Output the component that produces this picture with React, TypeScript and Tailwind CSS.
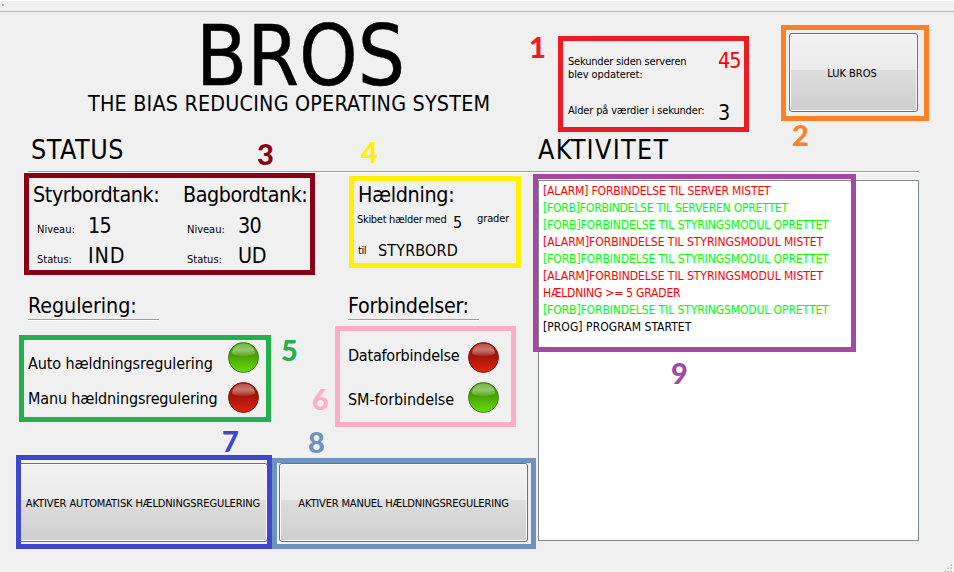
import type { ReactNode } from "react";

type Tone = "green" | "red";

function Led({ tone }: { tone: Tone }) {
  const id = `led-${tone}`;
  const green = tone === "green";
  return (
    <svg width="31" height="31" viewBox="0 0 31 31" className="block shrink-0">
      <defs>
        <linearGradient id={id} x1="0" y1="0" x2="0" y2="1">
          <stop offset="0" stopColor={green ? "#46a008" : "#a01408"} />
          <stop offset="0.42" stopColor={green ? "#48a007" : "#a01509"} />
          <stop offset="1" stopColor={green ? "#66de0e" : "#e0220e"} />
        </linearGradient>
        <linearGradient id={`${id}-gloss`} x1="0" y1="0" x2="0" y2="1">
          <stop offset="0" stopColor="#fff" stopOpacity="0.25" />
          <stop offset="0.5" stopColor="#fff" stopOpacity="0.42" />
          <stop offset="1" stopColor="#fff" stopOpacity="0.08" />
        </linearGradient>
      </defs>
      <circle cx="15.5" cy="15.5" r="15" fill={`url(#${id})`} stroke={green ? "#3d8010" : "#84180e"} strokeWidth="1" />
      <path d="M15.5 1.5C8.5 1.5 4.2 6 4 11.5c5 3.6 18 3.6 23 0C26.800 6 22.500 1.500 15.500 1.500Z" fill={`url(#${id}-gloss)`} />
    </svg>
  );
}

function PushButton({ className, children }: { className: string; children: ReactNode }) {
  return (
    <button
      className={`h-[79px] shrink-0 whitespace-nowrap rounded-[3px] border border-[#707070] bg-[linear-gradient(to_bottom,#f2f2f2_0%,#ebebeb_47%,#dddddd_47%,#cfcfcf_100%)] pt-[3px] text-center text-[11px] shadow-[inset_0_0_0_1px_#f8f8f8] ${className}`}
    >
      {children}
    </button>
  );
}

function Tank({ name, level, status, nameClass, statusClass }: { name: string; level: string; status: string; nameClass: string; statusClass: string }) {
  return (
    <div className="flex w-[150px] flex-col gap-[6px] leading-[24px]">
      <h3 className={`mb-px text-[21.33px] ${nameClass}`}>{name}</h3>
      <div className="flex h-[24px] items-baseline pl-[4px] text-[11px]">
        <span className="w-[51px]">Niveau:</span>
        <span className="text-[21.33px] tracking-[-0.8px]">{level}</span>
      </div>
      <div className="flex h-[24px] items-baseline pl-[4px] text-[11px]">
        <span className="w-[51px]">Status:</span>
        <span className={`text-[21.33px] ${statusClass}`}>{status}</span>
      </div>
    </div>
  );
}

const log = [
  { text: "[ALARM] FORBINDELSE TIL SERVER MISTET", style: "text-[#ff0000] tracking-[-0.15px]" },
  { text: "[FORB]FORBINDELSE TIL SERVEREN OPRETTET", style: "text-[#00ff00] tracking-[-0.2px]" },
  { text: "[FORB]FORBINDELSE TIL STYRINGSMODUL OPRETTET", style: "text-[#00ff00] tracking-[-0.09px]" },
  { text: "[ALARM]FORBINDELSE TIL STYRINGSMODUL MISTET", style: "text-[#ff0000] tracking-[-0.03px]" },
  { text: "[FORB]FORBINDELSE TIL STYRINGSMODUL OPRETTET", style: "text-[#00ff00] tracking-[-0.09px]" },
  { text: "[ALARM]FORBINDELSE TIL STYRINGSMODUL MISTET", style: "text-[#ff0000] tracking-[-0.03px]" },
  { text: "HÆLDNING >= 5 GRADER", style: "text-[#ff0000] tracking-[-0.2px]" },
  { text: "[FORB]FORBINDELSE TIL STYRINGSMODUL OPRETTET", style: "text-[#00ff00] tracking-[-0.09px]" },
  { text: "[PROG] PROGRAM STARTET", style: "text-black tracking-[0.05px]" },
];

const frames = [
  "left-[558px] top-[36px] h-[96px] w-[191px] border-[#ed1c24]",
  "left-[781px] top-[25px] h-[96px] w-[148px] border-[#ff7f27]",
  "left-[24px] top-[173px] h-[102px] w-[291px] border-[#880015]",
  "left-[349px] top-[176px] h-[92px] w-[172px] border-[#fff200]",
  "left-[19px] top-[335px] h-[87px] w-[252px] border-[#22b14c]",
  "left-[335px] top-[326px] h-[101px] w-[181px] border-[#ffaec9]",
  "left-[272px] top-[458px] h-[91px] w-[264px] border-[#7092be]",
  "left-[16px] top-[455px] h-[94px] w-[256px] border-[#3f48cc]",
  "left-[533px] top-[174px] h-[178px] w-[323px] border-[#a349a4]",
];

const marks = [
  "left-[529px] top-[37px] text-[#ed1c24]",
  "left-[792px] top-[125px] text-[#ff7f27]",
  "left-[257px] top-[144px] text-[#880015]",
  "left-[361px] top-[142px] text-[#fff200]",
  "left-[281px] top-[340px] text-[#22b14c]",
  "left-[312px] top-[389px] text-[#ffaec9]",
  "left-[222px] top-[431px] text-[#3f48cc]",
  "left-[308px] top-[432px] text-[#7092be]",
  "left-[671px] top-[363px] text-[#a349a4]",
];

export default function App() {
  return (
    <div className="relative flex h-[572px] w-[954px] flex-col overflow-hidden whitespace-nowrap bg-[#f0f0f0] font-['DejaVu_Sans_Condensed','DejaVu_Sans',sans-serif] text-black">
      <div className="h-[12px] shrink-0 border-b border-t border-b-[#b8b8b8] border-t-white pl-[2px] pt-[3px]">
        <div className="size-[2px] bg-[#b0b0b0] shadow-[1px_1px_0_white]" />
      </div>

      <header className="flex h-[159px] shrink-0">
        <div className="w-[538px] pt-[7px]">
          <h1 className="pl-[196px] text-[83px] leading-[75px] [-webkit-text-stroke:0.5px_black]">BROS</h1>
          <p className="pl-[88px] text-[21.33px] leading-[20px] tracking-[0.21px]">THE BIAS REDUCING OPERATING SYSTEM</p>
          <h2 className="mt-[21px] pl-[31px] text-[26.67px] leading-[30px] tracking-[0.6px]">STATUS</h2>
        </div>
        <div className="flex w-[416px] flex-col">
          <div className="flex h-[123px] pl-[30px]">
            <div className="w-[150px] pt-[43px] text-[11px] leading-[13px]">
              <p className="tracking-[-0.2px]">Sekunder siden serveren</p>
              <p className="tracking-[-0.1px]">blev opdateret:</p>
              <p className="mt-[23px] tracking-[-0.16px]">Alder på værdier i sekunder:</p>
            </div>
            <div className="w-[71px] pt-[37px] text-[21.33px] leading-[24px]">
              <p className="tracking-[-0.9px] text-[#ff0000]">45</p>
              <p className="mt-[28px]">3</p>
            </div>
            <div className="pt-[21px]">
              <PushButton className="w-[129px] pr-[3px]">LUK BROS</PushButton>
            </div>
          </div>
          <h2 className="text-[26.67px] leading-[30px] tracking-[1.3px]">AKTIVITET</h2>
        </div>
      </header>

      <hr className="ml-[28px] h-[2px] w-[891px] shrink-0 border-b border-t border-b-white border-t-[#a0a0a0]" />

      <main className="flex flex-1">
        <div className="flex w-[538px] flex-col">
          <section className="flex h-[121px] pl-[33px] pt-[10px]">
            <Tank name="Styrbordtank:" level="15" status="IND" nameClass="tracking-[-0.4px]" statusClass="tracking-[0.9px]" />
            <Tank name="Bagbordtank:" level="30" status="UD" nameClass="tracking-[-0.45px]" statusClass="tracking-[-0.2px]" />
            <div className="ml-[25px]">
              <h3 className="text-[21.33px] leading-[24px] tracking-[-0.3px]">Hældning:</h3>
              <div className="ml-[-1px] flex h-[33px] items-start text-[11px] leading-[14px]">
                <span className="w-[96px] pt-[6px] tracking-[-0.3px]">Skibet hælder med</span>
                <span className="w-[24px] pt-[6px] text-[16px] leading-[20px]">5</span>
                <span className="pt-[5px] tracking-[-0.1px]">grader</span>
              </div>
              <div className="flex items-start text-[11px] leading-[14px]">
                <span className="w-[20px] pt-[4px] tracking-[-0.4px]">til</span>
                <span className="pt-px text-[16px] leading-[20px] tracking-[0.15px]">STYRBORD</span>
              </div>
            </div>
          </section>

          <section className="flex h-[169px] pl-[28px] text-[16px] leading-[20px]">
            <div className="w-[320px]">
              <h3 className="text-[21.33px] leading-[24px] tracking-[-0.1px]">Regulering:</h3>
              <hr className="mt-[1px] h-[2px] w-[131px] border-b border-t border-b-white border-t-[#a0a0a0]" />
              <div className="mt-[21px] flex h-[40px]">
                <span className="w-[200px] pt-[12px] tracking-[-0.09px]">Auto hældningsregulering</span>
                <Led tone="green" />
              </div>
              <div className="flex">
                <span className="w-[200px] pt-[7px] tracking-[-0.15px]">Manu hældningsregulering</span>
                <Led tone="red" />
              </div>
            </div>
            <div>
              <h3 className="text-[21.33px] leading-[24px] tracking-[-0.3px]">Forbindelser:</h3>
              <hr className="mt-[1px] h-[2px] w-[131px] border-b border-t border-b-white border-t-[#a0a0a0]" />
              <div className="mt-[21px] flex h-[40px]">
                <span className="w-[120px] pt-[4px] tracking-[-0.22px]">Dataforbindelse</span>
                <Led tone="red" />
              </div>
              <div className="flex">
                <span className="w-[120px] pt-[8px] tracking-[-0.08px]">SM-forbindelse</span>
                <Led tone="green" />
              </div>
            </div>
          </section>

          <div className="flex gap-[11px] pl-[18px]">
            <PushButton className="w-[250px] tracking-[-0.1px]">AKTIVER AUTOMATISK HÆLDNINGSREGULERING</PushButton>
            <PushButton className="w-[249px] tracking-[-0.16px]">AKTIVER MANUEL HÆLDNINGSREGULERING</PushButton>
          </div>
        </div>

        <div className="mt-[7px] h-[361px] w-[381px] border border-[#828790] bg-white pl-[4px] pt-[2px] text-[12px] leading-[17px]">
          {log.map((entry, i) => (
            <p key={i} className={entry.style}>
              {entry.text}
            </p>
          ))}
        </div>
      </main>

      {frames.map((place) => (
        <div key={place} className={`pointer-events-none absolute border-[5px] ${place}`} />
      ))}
      {marks.map((place, i) => (
        <span key={place} className={`absolute font-['Lato',sans-serif] text-[29px] font-black leading-[20px] ${place}`}>
          {i + 1}
        </span>
      ))}

      <svg width="10" height="8" viewBox="0 0 10 8" className="absolute bottom-0 right-0">
        <path d="M7 1h2v2h-2zM4 4h2v2h-2zM7 4h2v2h-2zM1 7h2v1h-2zM4 7h2v1h-2zM7 7h2v1h-2z" fill="#fff" />
        <path d="M6.500 .5h1.500v1.500h-1.500zM3.500 3.500h1.500v1.500h-1.500zM6.500 3.500h1.500v1.500h-1.500zM.5 6.500h1.500v1.500h-1.500zM3.500 6.500h1.500v1.500h-1.500zM6.500 6.500h1.500v1.500h-1.500z" fill="#b8b8b8" />
      </svg>
    </div>
  );
}
